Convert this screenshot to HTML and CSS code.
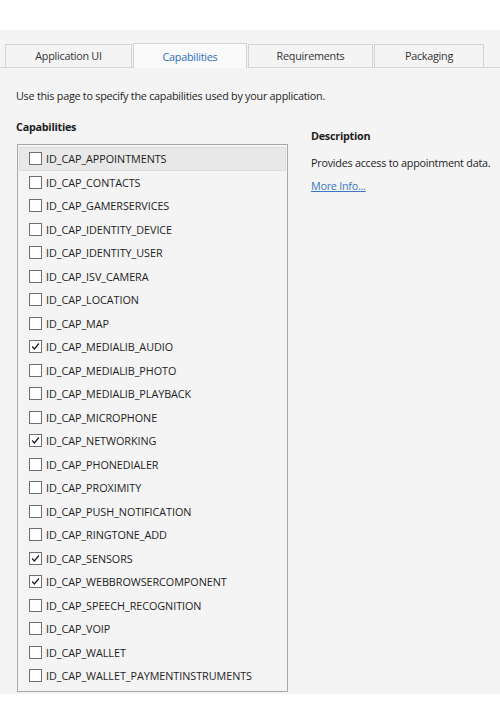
FILE: index.html
```html
<!DOCTYPE html>
<html>
<head>
<meta charset="utf-8">
<link rel="stylesheet" href="styles.css">
</head>
<body>
<div class="top"></div>
<div class="panel">
  <div class="tabs">
    <div class="tab">Application UI</div>
    <div class="tab active">Capabilities</div>
    <div class="tab">Requirements</div>
    <div class="tab">Packaging</div>
  </div>
  <p class="intro">Use this page to specify the capabilities used by your application.</p>
  <div class="content">
    <div class="left">
      <div class="label">Capabilities</div>
      <div class="list">
        <div class="row sel"><span class="cb"></span>ID_CAP_APPOINTMENTS</div>
        <div class="row"><span class="cb"></span>ID_CAP_CONTACTS</div>
        <div class="row"><span class="cb"></span>ID_CAP_GAMERSERVICES</div>
        <div class="row"><span class="cb"></span>ID_CAP_IDENTITY_DEVICE</div>
        <div class="row"><span class="cb"></span>ID_CAP_IDENTITY_USER</div>
        <div class="row"><span class="cb"></span>ID_CAP_ISV_CAMERA</div>
        <div class="row"><span class="cb"></span>ID_CAP_LOCATION</div>
        <div class="row"><span class="cb"></span>ID_CAP_MAP</div>
        <div class="row"><span class="cb on"><svg viewBox="0 0 13 13"><path d="M2.5 6.5 L5.2 9.3 L10.5 3" fill="none" stroke="#222" stroke-width="1.6"/></svg></span>ID_CAP_MEDIALIB_AUDIO</div>
        <div class="row"><span class="cb"></span>ID_CAP_MEDIALIB_PHOTO</div>
        <div class="row"><span class="cb"></span>ID_CAP_MEDIALIB_PLAYBACK</div>
        <div class="row"><span class="cb"></span>ID_CAP_MICROPHONE</div>
        <div class="row"><span class="cb on"><svg viewBox="0 0 13 13"><path d="M2.5 6.5 L5.2 9.3 L10.5 3" fill="none" stroke="#222" stroke-width="1.6"/></svg></span>ID_CAP_NETWORKING</div>
        <div class="row"><span class="cb"></span>ID_CAP_PHONEDIALER</div>
        <div class="row"><span class="cb"></span>ID_CAP_PROXIMITY</div>
        <div class="row"><span class="cb"></span>ID_CAP_PUSH_NOTIFICATION</div>
        <div class="row"><span class="cb"></span>ID_CAP_RINGTONE_ADD</div>
        <div class="row"><span class="cb on"><svg viewBox="0 0 13 13"><path d="M2.5 6.5 L5.2 9.3 L10.5 3" fill="none" stroke="#222" stroke-width="1.6"/></svg></span>ID_CAP_SENSORS</div>
        <div class="row"><span class="cb on"><svg viewBox="0 0 13 13"><path d="M2.5 6.5 L5.2 9.3 L10.5 3" fill="none" stroke="#222" stroke-width="1.6"/></svg></span>ID_CAP_WEBBROWSERCOMPONENT</div>
        <div class="row"><span class="cb"></span>ID_CAP_SPEECH_RECOGNITION</div>
        <div class="row"><span class="cb"></span>ID_CAP_VOIP</div>
        <div class="row"><span class="cb"></span>ID_CAP_WALLET</div>
        <div class="row"><span class="cb"></span>ID_CAP_WALLET_PAYMENTINSTRUMENTS</div>
      </div>
    </div>
    <div class="right">
      <div class="dlabel">Description</div>
      <div class="dtext">Provides access to appointment data.</div>
      <a class="more" href="#">More Info...</a>
    </div>
  </div>
</div>
</body>
</html>
```
FILE: styles.css
```css
html, body {
  margin: 0;
  padding: 0;
  background: #ffffff;
}
body {
  width: 500px;
  height: 725px;
  font-family: "Open Sans", "Noto Sans", sans-serif;
  font-size: 10.8px;
  letter-spacing: -0.25px;
  color: #1e1e1e;
}
.top {
  height: 30px;
  background: #ffffff;
}
.panel {
  background: #f4f4f4;
  height: 664px;
  box-sizing: border-box;
  padding-top: 14px;
}
.tabs {
  display: flex;
  padding-left: 5px;
  height: 23px;
  border-bottom: 1px solid #d8d8d8;
  align-items: flex-end;
}
.tab {
  box-sizing: border-box;
  height: 23px;
  border: 1px solid #d4d4d4;
  border-bottom: none;
  background: #f4f4f4;
  text-align: center;
  line-height: 22px;
  color: #333;
  margin-right: 1px;
}
.tab:nth-child(1) { width: 127px; }
.tab:nth-child(2) { width: 114px; }
.tab:nth-child(3) { width: 125px; }
.tab:nth-child(4) { width: 110px; }
.tab.active {
  height: 25px;
  margin-bottom: -1px;
  background: #fafafa;
  color: #2a6ebb;
  line-height: 25px;
}
.intro {
  margin: 20px 0 0 16px;
  line-height: 16px;
}
.content {
  display: flex;
  margin-top: 15px;
}
.left {
  margin-left: 16px;
  width: 272px;
  flex: none;
}
.label, .dlabel {
  font-weight: bold;
  line-height: 16px;
}
.list {
  margin-top: 9px;
  margin-left: 1px;
  width: 271px;
  box-sizing: border-box;
  border: 1px solid #a8a8a8;
  padding: 2px 1px 3px 1px;
  letter-spacing: -0.05px;
}
.row {
  height: 23.5px;
  box-sizing: border-box;
  display: flex;
  align-items: center;
  padding-left: 9px;
  border: 1px solid transparent;
}
.row.sel {
  background: #e8e8e8;
  border-color: #dcdcdc;
}
.cb {
  width: 13px;
  height: 13px;
  box-sizing: border-box;
  border: 1px solid #6e6e6e;
  background: #ffffff;
  margin-right: 4px;
  display: inline-flex;
  flex: none;
}
.cb svg {
  width: 11px;
  height: 11px;
}
.right {
  margin-left: 23px;
  padding-top: 9px;
  flex: 1;
}
.dtext {
  margin-top: 11px;
  line-height: 16px;
  white-space: nowrap;
}
.more {
  display: inline-block;
  margin-top: 7px;
  color: #3a78c5;
  text-decoration: underline;
  line-height: 16px;
}
```
